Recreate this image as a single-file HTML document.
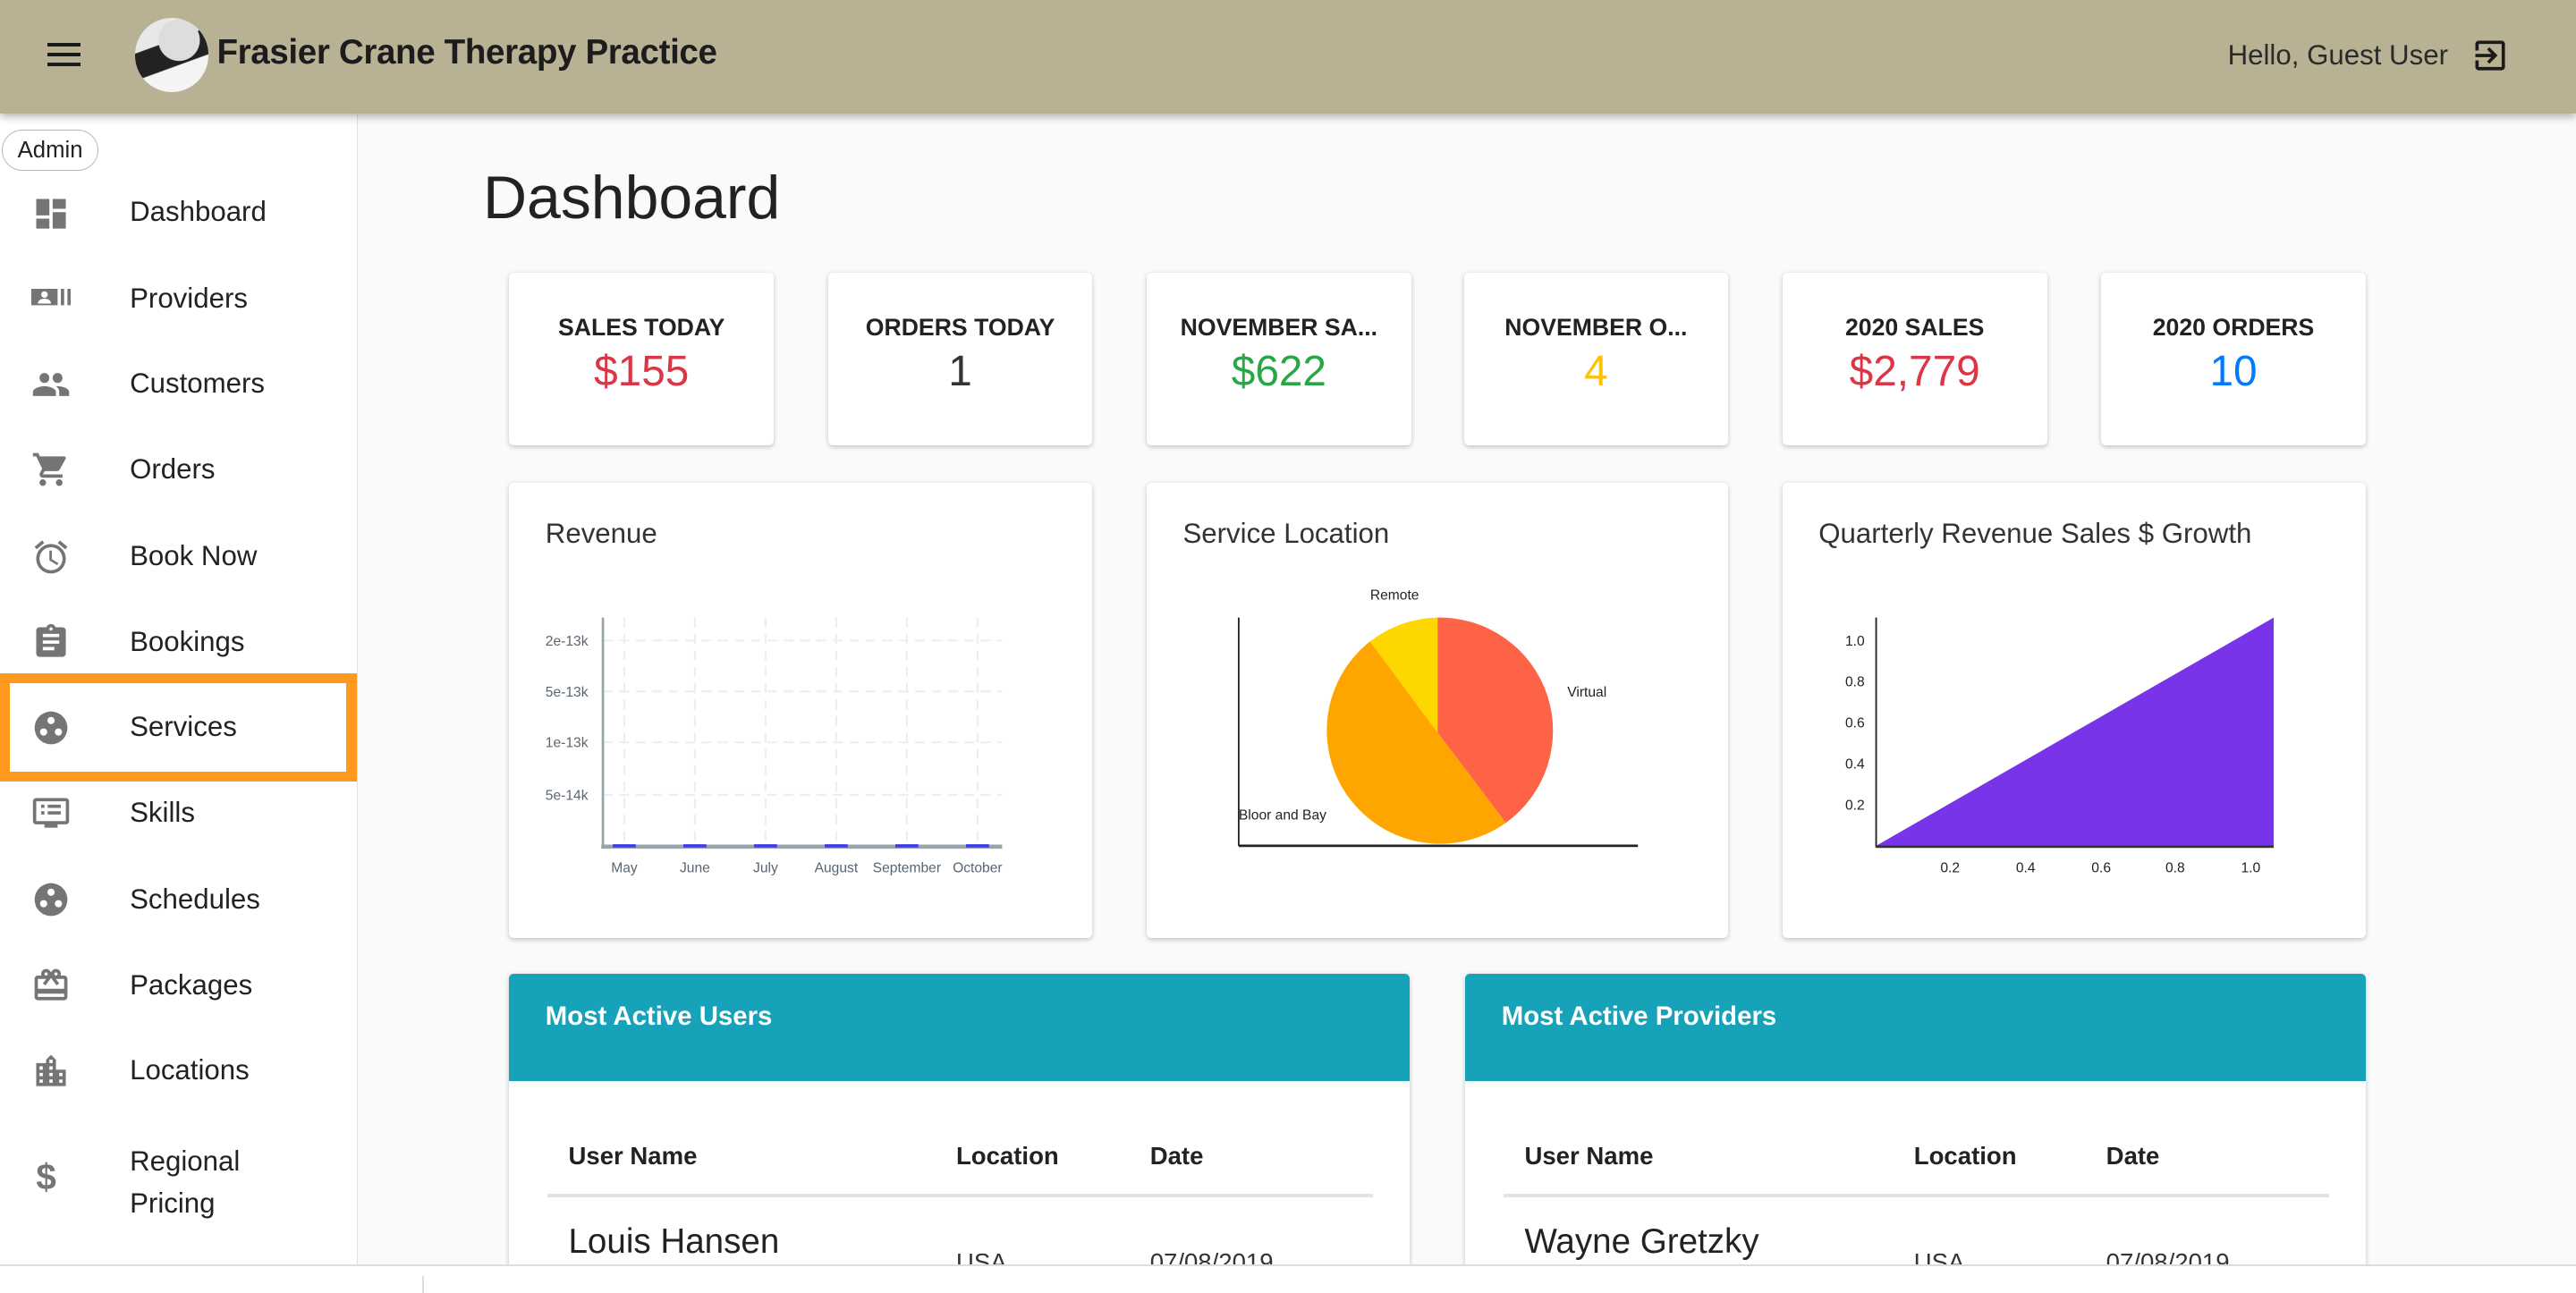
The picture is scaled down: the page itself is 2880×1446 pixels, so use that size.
<!DOCTYPE html>
<html><head><meta charset="utf-8">
<style>
html,body{margin:0;padding:0;}
body{width:2880px;height:1444px;overflow:hidden;background:#fafafa;font-family:"Liberation Sans",sans-serif;}
#p{position:relative;width:1568px;height:787px;zoom:1.83673;overflow:hidden;background:#fafafa;}
.a{position:absolute;}
.hdr{left:0;top:0;width:1568px;height:69px;background:#b8b194;box-shadow:0 2px 5px rgba(0,0,0,.3);z-index:3;}
.side{left:0;top:69px;width:217px;height:702px;background:#fff;border-right:1px solid #e0e0e0;}
.mi{position:absolute;left:79px;font-size:17px;color:#222;}
.ic{position:absolute;left:19px;width:24px;height:24px;}
.card{position:absolute;background:#fff;border-radius:3px;box-shadow:0 1px 3px rgba(0,0,0,.22);}
.st{top:166px;width:161px;height:105px;text-align:center;}
.st .l{position:absolute;top:25px;left:0;right:0;font-size:14.5px;font-weight:bold;color:#222;white-space:nowrap;}
.st .v{position:absolute;top:45px;left:0;right:0;font-size:26px;}
.ch{top:294px;height:277px;}
.ch .t{position:absolute;left:22px;top:21px;font-size:17px;color:#333;}
.tb{top:593px;width:548px;height:200px;overflow:hidden;}
.tb .h{height:65px;background:#16a2b8;color:#fff;font-weight:bold;font-size:16px;padding:17px 22px;box-sizing:border-box;}
.th{position:absolute;top:102px;font-size:15px;font-weight:bold;color:#222;}
.line{position:absolute;left:23px;width:503px;top:134px;height:2px;background:#dfe2e6;}
.td{position:absolute;font-size:15px;color:#333;}
</style></head><body><div id="p">

<div class="a hdr">
  <div class="a" style="left:29px;top:26px;width:20px;height:2.4px;background:#1a1a1a;box-shadow:0 6px 0 #1a1a1a,0 12px 0 #1a1a1a;"></div>
  <div class="a" style="left:82px;top:11px;width:45px;height:45px;border-radius:50%;background:radial-gradient(circle at 60% 30%,#ddd 0 30%,transparent 31%),linear-gradient(160deg,#e8e8e8 0 35%,#222 36% 62%,#f4f4f4 63%);"></div>
  <div class="a" style="left:132px;top:20px;font-size:21px;font-weight:bold;color:#1c1c1c;letter-spacing:-0.2px;">Frasier Crane Therapy Practice</div>
  <div class="a" style="left:1356px;top:24px;font-size:17px;color:#2a2a2a;font-weight:300;">Hello, Guest User</div>
  <svg class="a" style="left:1504px;top:22px" width="24" height="24" viewBox="0 0 24 24"><path d="M10.1 15.6L11.5 17l5-5-5-5-1.4 1.4 2.6 2.6H3v2h9.7l-2.6 2.6zM19 3H5c-1.1 0-2 .9-2 2v4h2V5h14v14H5v-4H3v4c0 1.1.9 2 2 2h14c1.1 0 2-.9 2-2V5c0-1.1-.9-2-2-2z" fill="#1a1a1a"/></svg>
</div>

<div class="a side">
  <div class="a" style="left:1px;top:10px;width:58px;height:24px;border:1px solid #bbb;border-radius:13px;font-size:14px;line-height:24px;text-align:center;color:#222;">Admin</div>
  <div class="a" style="left:0;top:341px;width:217px;height:66px;box-sizing:border-box;border:6px solid #ff9a1f;border-right-width:7px;"></div>
</div>

<!-- menu -->
<svg class="ic" style="top:118px" viewBox="0 0 24 24"><path fill="#757575" d="M3 13h8V3H3v10zm0 8h8v-6H3v6zm10 0h8V11h-8v10zm0-18v6h8V3h-8z"/></svg>
<div class="mi" style="top:119px">Dashboard</div>
<svg class="ic" style="top:170px" viewBox="0 0 24 24"><path fill="#757575" d="M0 6h16v10H0zM18 6h2v10h-2zM22 6h2v10h-2z"/><circle cx="8" cy="9.5" r="2" fill="#fff"/><path d="M4 15c0-2 2-3 4-3s4 1 4 3z" fill="#fff"/></svg>
<div class="mi" style="top:172px">Providers</div>
<svg class="ic" style="top:222px" viewBox="0 0 24 24"><path fill="#757575" d="M16 11c1.66 0 2.99-1.34 2.99-3S17.66 5 16 5c-1.66 0-3 1.34-3 3s1.34 3 3 3zm-8 0c1.66 0 2.99-1.34 2.99-3S9.66 5 8 5C6.34 5 5 6.34 5 8s1.34 3 3 3zm0 2c-2.33 0-7 1.17-7 3.5V19h14v-2.5c0-2.33-4.67-3.5-7-3.5zm8 0c-.29 0-.62.02-.97.05 1.16.84 1.97 1.97 1.97 3.45V19h6v-2.5c0-2.33-4.67-3.5-7-3.5z"/></svg>
<div class="mi" style="top:224px">Customers</div>
<svg class="ic" style="top:274px" viewBox="0 0 24 24"><path fill="#757575" d="M7 18c-1.1 0-1.99.9-1.99 2S5.9 22 7 22s2-.9 2-2-.9-2-2-2zM1 2v2h2l3.6 7.59-1.35 2.45c-.16.28-.25.61-.25.96 0 1.1.9 2 2 2h12v-2H7.42c-.14 0-.25-.11-.25-.25l.03-.12.9-1.63h7.45c.75 0 1.41-.41 1.75-1.03l3.58-6.49A1 1 0 0020 4H5.21l-.94-2H1zm16 16c-1.1 0-1.99.9-1.99 2s.89 2 1.99 2 2-.9 2-2-.9-2-2-2z"/></svg>
<div class="mi" style="top:276px">Orders</div>
<svg class="ic" style="top:327px" viewBox="0 0 24 24"><path fill="#757575" d="M22 5.72l-4.6-3.86-1.29 1.53 4.6 3.86L22 5.72zM7.88 3.39L6.6 1.86 2 5.71l1.29 1.53 4.59-3.85zM12.5 8H11v6l4.75 2.85.75-1.23-4-2.37V8zM12 4c-4.97 0-9 4.03-9 9s4.02 9 9 9a9 9 0 000-18zm0 16c-3.87 0-7-3.13-7-7s3.13-7 7-7 7 3.13 7 7-3.13 7-7 7z"/></svg>
<div class="mi" style="top:329px">Book Now</div>
<svg class="ic" style="top:379px" viewBox="0 0 24 24"><path fill="#757575" d="M19 3h-4.18C14.4 1.84 13.3 1 12 1s-2.4.84-2.82 2H5c-1.1 0-2 .9-2 2v14c0 1.1.9 2 2 2h14c1.1 0 2-.9 2-2V5c0-1.1-.9-2-2-2zm-7 0c.55 0 1 .45 1 1s-.45 1-1 1-1-.45-1-1 .45-1 1-1zm2 14H7v-2h7v2zm3-4H7v-2h10v2zm0-4H7V7h10v2z"/></svg>
<div class="mi" style="top:381px">Bookings</div>
<svg class="ic" style="top:431px" viewBox="0 0 24 24"><circle cx="12" cy="12" r="10" fill="#757575"/><circle cx="12" cy="7.5" r="2.2" fill="#fff"/><circle cx="7.5" cy="14.5" r="2.2" fill="#fff"/><circle cx="16.5" cy="14.5" r="2.2" fill="#fff"/></svg>
<div class="mi" style="top:433px">Services</div>
<svg class="ic" style="top:483px" viewBox="0 0 24 24"><path fill="#757575" d="M21 3H3c-1.1 0-2 .9-2 2v12c0 1.1.9 2 2 2h5v2h8v-2h5c1.1 0 2-.9 2-2V5c0-1.1-.9-2-2-2zm0 14H3V5h18v12zM6 7h2v2H6zm4 0h8v2h-8zm-4 4h2v2H6zm4 0h8v2h-8z"/></svg>
<div class="mi" style="top:485px">Skills</div>
<svg class="ic" style="top:536px" viewBox="0 0 24 24"><circle cx="12" cy="12" r="10" fill="#757575"/><circle cx="12" cy="7.5" r="2.2" fill="#fff"/><circle cx="7.5" cy="14.5" r="2.2" fill="#fff"/><circle cx="16.5" cy="14.5" r="2.2" fill="#fff"/></svg>
<div class="mi" style="top:538px">Schedules</div>
<svg class="ic" style="top:588px" viewBox="0 0 24 24"><path fill="#757575" d="M20 6h-2.18c.11-.31.18-.65.18-1 0-1.66-1.34-3-3-3-1.05 0-1.96.54-2.5 1.35l-.5.67-.5-.68C10.96 2.54 10.05 2 9 2 7.34 2 6 3.34 6 5c0 .35.07.69.18 1H4c-1.11 0-1.99.89-1.99 2L2 19c0 1.11.89 2 2 2h16c1.11 0 2-.89 2-2V8c0-1.11-.89-2-2-2zm-5-2c.55 0 1 .45 1 1s-.45 1-1 1-1-.45-1-1 .45-1 1-1zM9 4c.55 0 1 .45 1 1s-.45 1-1 1-1-.45-1-1 .45-1 1-1zm11 15H4v-2h16v2zm0-5H4V8h5.08L7 10.83 8.62 12 11 8.76l1-1.36 1 1.36L15.38 12 17 10.83 14.92 8H20v6z"/></svg>
<div class="mi" style="top:590px">Packages</div>
<svg class="ic" style="top:640px" viewBox="0 0 24 24"><path fill="#757575" d="M15 11V5l-3-3-3 3v2H3v14h18V11h-6zm-8 8H5v-2h2v2zm0-4H5v-2h2v2zm0-4H5V9h2v2zm6 8h-2v-2h2v2zm0-4h-2v-2h2v2zm0-4h-2V9h2v2zm0-4h-2V5h2v2zm6 12h-2v-2h2v2zm0-4h-2v-2h2v2z"/></svg>
<div class="mi" style="top:642px">Locations</div>
<div class="a" style="left:22px;top:704px;font-size:22px;color:#757575;font-weight:bold;">$</div>
<div class="mi" style="top:694px;line-height:26px">Regional<br>Pricing</div>

<!-- main -->
<div class="a" style="left:294px;top:99px;font-size:37px;color:#222;">Dashboard</div>

<div class="card st" style="left:310px"><div class="l">SALES TODAY</div><div class="v" style="color:#dc3545">$155</div></div>
<div class="card st" style="left:504px"><div class="l">ORDERS TODAY</div><div class="v" style="color:#333">1</div></div>
<div class="card st" style="left:698px"><div class="l">NOVEMBER SA...</div><div class="v" style="color:#28a745">$622</div></div>
<div class="card st" style="left:891px"><div class="l">NOVEMBER O...</div><div class="v" style="color:#ffc107">4</div></div>
<div class="card st" style="left:1085px"><div class="l">2020 SALES</div><div class="v" style="color:#dc3545">$2,779</div></div>
<div class="card st" style="left:1279px"><div class="l">2020 ORDERS</div><div class="v" style="color:#007bff">10</div></div>

<div class="card ch" style="left:310px;width:355px"><div class="t">Revenue</div></div>
<div class="card ch" style="left:698px;width:354px"><div class="t">Service Location</div></div>
<div class="card ch" style="left:1085px;width:355px"><div class="t">Quarterly Revenue Sales $ Growth</div></div>

<svg class="a" style="left:0;top:0" width="1568" height="786" font-family="Liberation Sans, sans-serif">
  <!-- revenue -->
  <g stroke="#eceef1" stroke-width="1.2" stroke-dasharray="6 4">
    <line x1="367" y1="390" x2="610" y2="390"/><line x1="367" y1="421" x2="610" y2="421"/>
    <line x1="367" y1="452" x2="610" y2="452"/><line x1="367" y1="484" x2="610" y2="484"/>
    <line x1="380" y1="376" x2="380" y2="515"/><line x1="423" y1="376" x2="423" y2="515"/>
    <line x1="466" y1="376" x2="466" y2="515"/><line x1="509" y1="376" x2="509" y2="515"/>
    <line x1="552" y1="376" x2="552" y2="515"/><line x1="595" y1="376" x2="595" y2="515"/>
  </g>
  <line x1="367" y1="376" x2="367" y2="516" stroke="#9aa4ab" stroke-width="1.5"/>
  <line x1="366" y1="515.5" x2="610" y2="515.5" stroke="#9aa4ab" stroke-width="2.5"/>
  <g stroke="#3b3bf0" stroke-width="2"><line x1="373" y1="515" x2="387" y2="515"/><line x1="416" y1="515" x2="430" y2="515"/><line x1="459" y1="515" x2="473" y2="515"/><line x1="502" y1="515" x2="516" y2="515"/><line x1="545" y1="515" x2="559" y2="515"/><line x1="588" y1="515" x2="602" y2="515"/></g>
  <g font-size="8.5" fill="#5a6570" text-anchor="end"><text x="358" y="393">2e-13k</text><text x="358" y="424">5e-13k</text><text x="358" y="455">1e-13k</text><text x="358" y="487">5e-14k</text></g>
  <g font-size="8.5" fill="#5a6570" text-anchor="middle"><text x="380" y="531">May</text><text x="423" y="531">June</text><text x="466" y="531">July</text><text x="509" y="531">August</text><text x="552" y="531">September</text><text x="595" y="531">October</text></g>
  <!-- pie -->
  <line x1="754" y1="376" x2="754" y2="515" stroke="#222" stroke-width="1"/>
  <line x1="754" y1="515" x2="997" y2="515" stroke="#222" stroke-width="1.5"/>
  <path d="M875 446 L875 376 A69 69 0 0 1 916.6 501 Z" fill="#ff6347"/>
  <path d="M875 446 L916.6 501 A69 69 0 0 1 834 390.5 Z" fill="#ffa500"/>
  <path d="M875 446 L834 390.5 A69 69 0 0 1 875 376 Z" fill="#ffd700"/>
  <g font-size="8.5" fill="#222"><text x="834" y="365">Remote</text><text x="954" y="424">Virtual</text><text x="754" y="499">Bloor and Bay</text></g>
  <!-- area -->
  <path d="M1142 515 L1384 376 L1384 515 Z" fill="#7934ea"/>
  <line x1="1142" y1="376" x2="1142" y2="516" stroke="#222" stroke-width="1"/>
  <line x1="1142" y1="515.5" x2="1384" y2="515.5" stroke="#333" stroke-width="1.5"/>
  <g font-size="8.5" fill="#222" text-anchor="end"><text x="1135" y="393">1.0</text><text x="1135" y="418">0.8</text><text x="1135" y="443">0.6</text><text x="1135" y="468">0.4</text><text x="1135" y="493">0.2</text></g>
  <g font-size="8.5" fill="#222" text-anchor="middle"><text x="1187" y="531">0.2</text><text x="1233" y="531">0.4</text><text x="1279" y="531">0.6</text><text x="1324" y="531">0.8</text><text x="1370" y="531">1.0</text></g>
</svg>

<div class="card tb" style="left:310px">
  <div class="h">Most Active Users</div>
  <div class="th" style="left:36px">User Name</div><div class="th" style="left:272px">Location</div><div class="th" style="left:390px">Date</div>
  <div class="line"></div>
  <div class="td" style="left:36px;top:151px;font-size:21px;color:#222">Louis Hansen</div>
  <div class="td" style="left:272px;top:167px">USA</div><div class="td" style="left:390px;top:167px">07/08/2019</div>
</div>
<div class="card tb" style="left:892px">
  <div class="h">Most Active Providers</div>
  <div class="th" style="left:36px">User Name</div><div class="th" style="left:273px">Location</div><div class="th" style="left:390px">Date</div>
  <div class="line"></div>
  <div class="td" style="left:36px;top:151px;font-size:21px;color:#222">Wayne Gretzky</div>
  <div class="td" style="left:273px;top:167px">USA</div><div class="td" style="left:390px;top:167px">07/08/2019</div>
</div>

<div class="a" style="left:0;top:770px;width:1568px;height:17px;background:#fff;border-top:1.5px solid #ddd;z-index:4;">
  <div class="a" style="left:257px;top:6px;width:1px;height:11px;background:#ddd;"></div>
</div>
</div></body></html>
